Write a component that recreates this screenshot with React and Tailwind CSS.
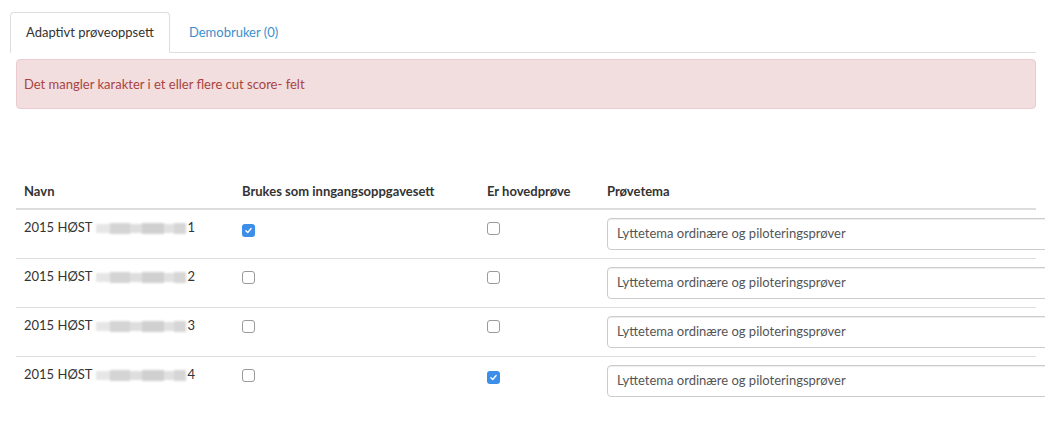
import { useState } from "react";

const rows = [
  { id: 1, suffix: "1", entry: true, main: false },
  { id: 2, suffix: "2", entry: false, main: false },
  { id: 3, suffix: "3", entry: false, main: false },
  { id: 4, suffix: "4", entry: false, main: true },
];

function Check({ checked }) {
  if (checked) {
    return (
      <span className="inline-flex h-[13px] w-[13px] items-center justify-center rounded-[3px] bg-[#3c8ee8]">
        <svg viewBox="0 0 12 12" className="h-[9px] w-[9px]" fill="none" stroke="white" strokeWidth="1.8" strokeLinecap="round" strokeLinejoin="round">
          <path d="M2.5 6.3 L5 8.6 L9.5 3.4" />
        </svg>
      </span>
    );
  }
  return <span className="inline-block h-[13px] w-[13px] rounded-[3px] border border-[#9a9a9a] bg-white" />;
}

function Blurred() {
  return (
    <span className="ml-[3px] mr-[2px] inline-flex h-[14px] w-[90px] items-center align-middle blur-[1px]">
      <span className="h-[9px] w-[14px] bg-[#e6e6e6]" />
      <span className="h-[11px] w-[20px] bg-[#d4d4d4]" />
      <span className="h-[9px] w-[12px] bg-[#dedede]" />
      <span className="h-[11px] w-[22px] bg-[#d0d0d0]" />
      <span className="h-[9px] w-[10px] bg-[#e0e0e0]" />
      <span className="h-[11px] w-[12px] bg-[#d6d6d6]" />
    </span>
  );
}

export default function App() {
  const [activeTab, setActiveTab] = useState("adaptive");

  return (
    <div className="min-h-screen overflow-hidden bg-white pl-[10px] pr-[9px] pt-[12px] font-['Lato',sans-serif] text-[13px] text-[#333]">
      <ul className="flex border-b border-[#ddd]">
        <li className="-mb-px">
          <button
            onClick={() => setActiveTab("adaptive")}
            className={`block rounded-t-[4px] border px-[15px] py-[10px] leading-[19px] ${
              activeTab === "adaptive" ? "border-[#ddd] border-b-white bg-white text-[#333]" : "border-transparent text-[#3d8fcc]"
            }`}
          >
            Adaptivt prøveoppsett
          </button>
        </li>
        <li className="-mb-px ml-[2px]">
          <button
            onClick={() => setActiveTab("demo")}
            className={`block rounded-t-[4px] border px-[16px] py-[10px] leading-[19px] ${
              activeTab === "demo" ? "border-[#ddd] border-b-white bg-white text-[#333]" : "border-transparent text-[#3d8fcc]"
            }`}
          >
            Demobruker (0)
          </button>
        </li>
      </ul>

      <div className="ml-[6px]">
        <div className="mt-[6px] rounded-[4px] border border-[#ebccd1] bg-[#f2dede] px-[7px] py-[15px] leading-[18px] text-[#a94442]">
          Det mangler karakter i et eller flere cut score- felt
        </div>

        <table className="mt-[65px] w-full table-fixed border-collapse">
          <colgroup>
            <col className="w-[218px]" />
            <col className="w-[245px]" />
            <col className="w-[120px]" />
            <col />
          </colgroup>
          <thead>
            <tr className="border-b-2 border-[#ddd] text-left">
              <th className="px-[8px] py-[8px] font-bold leading-[18px]">Navn</th>
              <th className="px-[8px] py-[8px] font-bold leading-[18px]">Brukes som inngangsoppgavesett</th>
              <th className="px-[8px] py-[8px] font-bold leading-[18px]">Er hovedprøve</th>
              <th className="px-[8px] py-[8px] font-bold leading-[18px]">Prøvetema</th>
            </tr>
          </thead>
          <tbody>
            {rows.map((row, i) => (
              <tr key={row.id} className={i > 0 ? "border-t border-[#ddd]" : ""}>
                <td className="px-[8px] py-[8px] align-top leading-[18px]">
                  <span className="whitespace-nowrap">
                    2015 HØST
                    <Blurred />
                    {row.suffix}
                  </span>
                </td>
                <td className="px-[8px] pb-[8px] pt-[11px] align-top">
                  <Check checked={row.entry} />
                </td>
                <td className="px-[8px] pb-[8px] pt-[11px] align-top">
                  <Check checked={row.main} />
                </td>
                <td className="overflow-visible px-[8px] py-[8px] align-top">
                  <div className="flex h-[32px] w-[460px] items-center rounded-[4px] border border-[#ccc] bg-white px-[9px] text-[#555] shadow-[inset_0_1px_1px_rgba(0,0,0,0.075)]">
                    Lyttetema ordinære og piloteringsprøver
                  </div>
                </td>
              </tr>
            ))}
          </tbody>
        </table>
      </div>
    </div>
  );
}
